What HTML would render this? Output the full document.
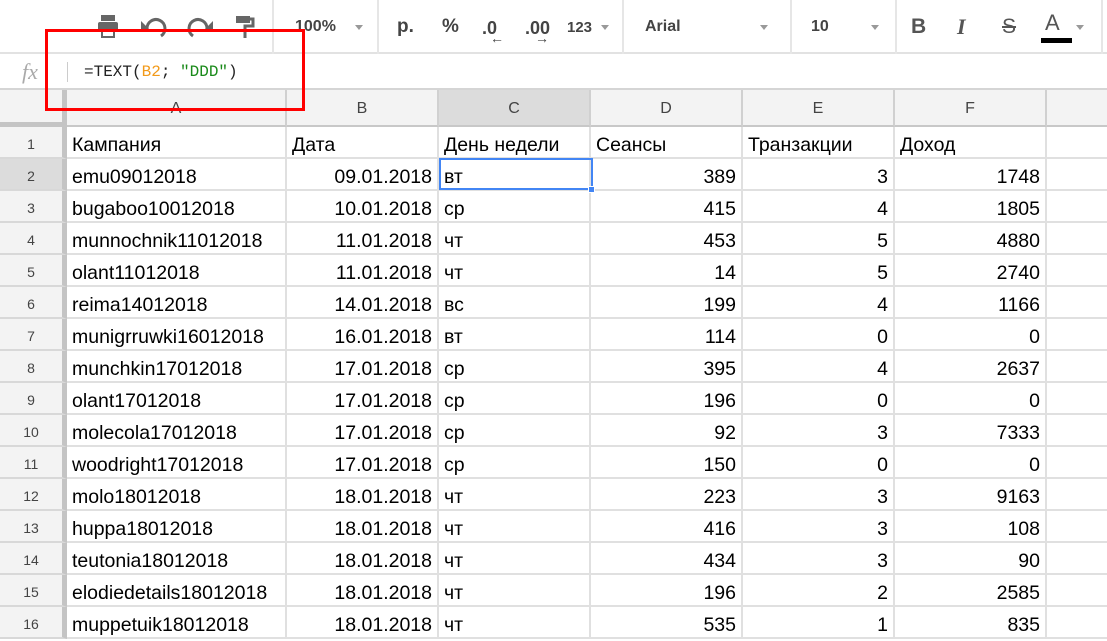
<!DOCTYPE html><html><head><meta charset="utf-8"><style>
*{margin:0;padding:0;box-sizing:border-box}
body{width:1107px;height:621px;overflow:hidden;background:#fff;font-family:"Liberation Sans",Arial,sans-serif;position:relative}
.a{position:absolute}
.tb{left:0;top:0;width:1107px;height:54px;border-bottom:2px solid #e2e2e2;background:#fff}
.sep{position:absolute;top:0;width:2px;height:54px;background:#e6e6e6}
.tt{position:absolute;top:18px;font-size:17px;font-weight:bold;color:#444}
.dd{position:absolute;top:25px;width:0;height:0;border-left:4px solid transparent;border-right:4px solid transparent;border-top:5px solid #999}
.fb{left:0;top:54px;width:1107px;height:36px;border-bottom:2px solid #d5d5d5}
.cell{position:absolute;height:32px;line-height:32px;padding-top:2px;font-size:19.5px;color:#000;padding-left:5px;padding-right:5px;white-space:nowrap;overflow:hidden;border-right:2px solid #e0e0e0;border-bottom:2px solid #e0e0e0}
.r{text-align:right}
.hd{position:absolute;background:#f3f3f3;color:#444;font-size:16px;text-align:center;border-right:2px solid #d0d0d0;border-bottom:2px solid #c8c8c8}
</style></head><body>
<div class="a tb">
<svg class="a" style="left:97px;top:14px" width="180" height="26" viewBox="0 0 180 26">
<g fill="#666"><rect x="4" y="1" width="14" height="6"/><rect x="1" y="8" width="20" height="10" rx="2"/><rect x="5" y="14" width="12" height="9" fill="#fff" stroke="#666" stroke-width="2"/></g>
<path d="M50 15 a9 9 0 1 1 14 7" fill="none" stroke="#666" stroke-width="3"/><path d="M44 7 v10 h10z" fill="#666"/>
<path d="M110 15 a9 9 0 1 0 -14 7" fill="none" stroke="#666" stroke-width="3"/><path d="M116 7 v10 h-10z" fill="#666"/>
<rect x="139" y="2" width="14" height="7" fill="#666"/><path d="M153 5h3v7h-8v12" fill="none" stroke="#666" stroke-width="3"/>
</svg>
<div class="sep" style="left:272px"></div>
<div class="tt" style="left:295px;font-size:16px">100%</div><div class="dd" style="left:355px"></div>
<div class="sep" style="left:377px"></div>
<div class="tt" style="left:397px;font-size:19px;top:16px">р.</div>
<div class="tt" style="left:442px;font-size:19px;top:16px">%</div>
<div class="tt" style="left:482px;font-size:18px">.0</div><div class="a" style="left:490px;top:30px;font-size:14px;color:#444;font-weight:bold">←</div>
<div class="tt" style="left:525px;font-size:18px">.00</div><div class="a" style="left:535px;top:30px;font-size:14px;color:#444;font-weight:bold">→</div>
<div class="tt" style="left:567px;font-size:15px;top:19px">123</div><div class="dd" style="left:601px"></div>
<div class="sep" style="left:622px"></div>
<div class="tt" style="left:645px;font-size:16px">Arial</div><div class="dd" style="left:760px"></div>
<div class="sep" style="left:790px"></div>
<div class="tt" style="left:811px;font-size:16px">10</div><div class="dd" style="left:871px"></div>
<div class="sep" style="left:895px"></div>
<div class="tt" style="left:911px;font-size:21px;top:15px;color:#555">B</div>
<div class="tt" style="left:957px;font-size:22px;top:14px;color:#555;font-style:italic;font-family:'Liberation Serif',serif">I</div>
<div class="tt" style="left:1002px;font-size:21px;top:15px;color:#555;text-decoration:line-through;font-weight:normal">S</div>
<div class="tt" style="left:1045px;font-size:22px;top:10px;color:#555;font-weight:normal">A</div>
<div class="a" style="left:1041px;top:38px;width:31px;height:5px;background:#000"></div>
<div class="dd" style="left:1076px"></div>
<div class="sep" style="left:1101px"></div>
</div>
<div class="a fb">
<div class="a" style="left:22px;top:5px;font-size:22px;font-style:italic;color:#aaa;font-family:'Liberation Serif',serif">fx</div>
<div class="a" style="left:67px;top:8px;width:1px;height:20px;background:#ccc"></div>
<div class="a" style="left:84px;top:9px;font-family:'Liberation Mono',monospace;font-size:16px;color:#222">=TEXT(<span style="color:#f29a1a">B2</span>; <span style="color:#1a8a1a">"DDD"</span>)</div>
</div>
<div class="hd" style="left:0;top:90px;width:67px;height:37px;border-right:5px solid #c4c4c4;border-bottom:5px solid #c4c4c4;background:#f3f3f3"></div>
<div id="g"></div>
<div class="a" style="left:45px;top:29px;width:260px;height:82px;border:3px solid #f00"></div>
<script>
var cols=[[67,220,'A'],[287,152,'B'],[439,152,'C'],[591,152,'D'],[743,152,'E'],[895,152,'F'],[1047,70,'']];
var data=[["Кампания","Дата","День недели","Сеансы","Транзакции","Доход"],
["emu09012018","09.01.2018","вт",389,3,1748],["bugaboo10012018","10.01.2018","ср",415,4,1805],
["munnochnik11012018","11.01.2018","чт",453,5,4880],["olant11012018","11.01.2018","чт",14,5,2740],
["reima14012018","14.01.2018","вс",199,4,1166],["munigrruwki16012018","16.01.2018","вт",114,0,0],
["munchkin17012018","17.01.2018","ср",395,4,2637],["olant17012018","17.01.2018","ср",196,0,0],
["molecola17012018","17.01.2018","ср",92,3,7333],["woodright17012018","17.01.2018","ср",150,0,0],
["molo18012018","18.01.2018","чт",223,3,9163],["huppa18012018","18.01.2018","чт",416,3,108],
["teutonia18012018","18.01.2018","чт",434,3,90],["elodiedetails18012018","18.01.2018","чт",196,2,2585],
["muppetuik18012018","18.01.2018","чт",535,1,835]];
var h='';
cols.forEach(function(c){h+='<div class="hd" style="left:'+c[0]+'px;top:90px;width:'+c[1]+'px;height:37px;line-height:38px;'+(c[2]=='C'?'background:#dcdcdc;':'')+'">'+c[2]+'</div>';});
data.forEach(function(row,i){var t=127+i*32;
h+='<div class="hd" style="left:0;top:'+t+'px;width:67px;height:32px;line-height:34px;font-size:14px;border-right:5px solid #c4c4c4;border-bottom:2px solid #d8d8d8;'+(i==1?'background:#dcdcdc;':'')+'">'+(i+1)+'</div>';
for(var j=0;j<7;j++){var c=cols[j];var v=j<6?row[j]:'';var right=i>0&&(j==1||j>=3);
h+='<div class="cell'+(right?' r':'')+'" style="left:'+c[0]+'px;top:'+t+'px;width:'+c[1]+'px">'+v+'</div>';}});
h+='<div class="a" style="left:439px;top:158px;width:154px;height:32px;border:2px solid #4285f4"></div><div class="a" style="left:588px;top:186px;width:7px;height:7px;background:#4285f4;border:1px solid #fff"></div>';
document.getElementById('g').innerHTML=h;
</script>
</body></html>
